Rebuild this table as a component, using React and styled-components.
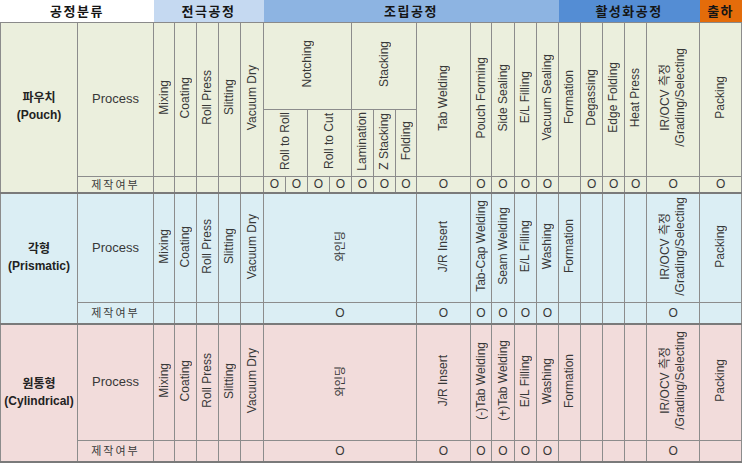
import React from 'react';
import styled, { createGlobalStyle } from 'styled-components';

const GlobalStyle = createGlobalStyle`
  body {
    margin: 0;
    background: #ffffff;
    font-family: "Liberation Sans", Arial, "Noto Sans CJK KR", sans-serif;
  }
`;

const COLORS = {
  pouch: '#ebefdd',
  prismatic: '#dbeef4',
  cylindrical: '#f2dcdb',
};

const WIDTHS = [77, 76, 21, 22, 22, 22, 23, 22, 22, 22, 22, 22, 22, 21, 54, 21, 23, 22, 22, 22, 22, 22, 22, 53, 42];

const Table = styled.table`
  border-collapse: collapse;
  table-layout: fixed;
  width: 742px;
  color: #383838;
`;

const Row = styled.tr`
  height: ${(p) => p.$h}px;
`;

const HeadCell = styled.th`
  background: ${(p) => p.$bg};
  padding: 0;
  border-bottom: 1px solid #8a8a8a;
  font-family: "Liberation Sans", "Noto Sans CJK KR", sans-serif;
  font-size: 13px;
  font-weight: bold;
  letter-spacing: 1.5px;
  color: #151515;
  text-align: center;
  vertical-align: middle;
`;

const Cell = styled.td`
  background: ${(p) => p.$bg};
  border: 1px solid #8c8c8c;
  ${(p) => p.$thickBottom && 'border-bottom: 2px solid #7a7a7a;'}
  padding: 0;
  font-size: 12px;
  line-height: 14px;
  text-align: center;
  vertical-align: middle;
  overflow: hidden;
`;

const TypeName = styled.div`
  font-family: "Liberation Sans", "Noto Sans CJK KR", sans-serif;
  font-weight: bold;
  font-size: 12px;
  line-height: 17px;
  color: #222;
`;

const ProcessLabel = styled.span`
  font-size: 13px;
`;

const MadeLabel = styled.span`
  font-family: "Noto Sans CJK KR", sans-serif;
  font-size: 11px;
  letter-spacing: 2px;
  color: #3a3a3a;
`;

const VText = styled.span`
  display: inline-block;
  writing-mode: vertical-rl;
  text-orientation: sideways;
  transform: rotate(180deg);
  white-space: nowrap;
  font-size: ${(p) => p.$size || 12}px;
  line-height: 15px;
`;

const Mark = styled.span`
  font-size: 12px;
`;

const V = ({ children, size }) => <VText $size={size}>{children}</VText>;

const madeCells = (values, bg) =>
  values.map((v, i) => (
    <Cell key={i} $bg={bg} colSpan={v.span || 1} $thickBottom>
      {v.o ? <Mark>O</Mark> : null}
    </Cell>
  ));

const ELECTRODE = ['Mixing', 'Coating', 'Roll Press', 'Slitting', 'Vacuum Dry'];

const OtherType = ({ name, sub, bg, items, h }) => (
  <>
    <Row $h={h}>
      <Cell $bg={bg} rowSpan={2} $thickBottom>
        <TypeName>
          {name}
          <br />
          {sub}
        </TypeName>
      </Cell>
      <Cell $bg={bg}>
        <ProcessLabel>Process</ProcessLabel>
      </Cell>
      {ELECTRODE.map((t) => (
        <Cell key={t} $bg={bg}>
          <V>{t}</V>
        </Cell>
      ))}
      <Cell $bg={bg} colSpan={7}>
        <V size={11}>와인딩</V>
      </Cell>
      <Cell $bg={bg}>
        <V>J/R Insert</V>
      </Cell>
      {[...items, 'Formation'].map((t) => (
        <Cell key={t} $bg={bg}>
          <V>{t}</V>
        </Cell>
      ))}
      <Cell $bg={bg} />
      <Cell $bg={bg} />
      <Cell $bg={bg} />
      <Cell $bg={bg}>
        <V>
          IR/OCV 측정
          <br />
          /Grading/Selecting
        </V>
      </Cell>
      <Cell $bg={bg}>
        <V>Packing</V>
      </Cell>
    </Row>
    <Row $h={21}>
      <Cell $bg={bg} $thickBottom>
        <MadeLabel>제작여부</MadeLabel>
      </Cell>
      {madeCells(
        [
          {}, {}, {}, {}, {},
          { o: true, span: 7 },
          { o: true },
          { o: true }, { o: true }, { o: true }, { o: true },
          {}, {}, {}, {},
          { o: true },
          {},
        ],
        bg
      )}
    </Row>
  </>
);

export default function App() {
  const pb = COLORS.pouch;
  return (
    <>
      <GlobalStyle />
      <Table>
        <colgroup>
          {WIDTHS.map((w, i) => (
            <col key={i} style={{ width: w }} />
          ))}
        </colgroup>
        <tbody>
          <Row $h={22}>
            <HeadCell colSpan={2} $bg="#ffffff">공정분류</HeadCell>
            <HeadCell colSpan={5} $bg="#c5d9f1">전극공정</HeadCell>
            <HeadCell colSpan={12} $bg="#8db4e2">조립공정</HeadCell>
            <HeadCell colSpan={5} $bg="#548dd4">활성화공정</HeadCell>
            <HeadCell $bg="#e46c0a">출하</HeadCell>
          </Row>

          <Row $h={87}>
            <Cell $bg={pb} rowSpan={3} $thickBottom>
              <TypeName>
                파우치
                <br />
                (Pouch)
              </TypeName>
            </Cell>
            <Cell $bg={pb} rowSpan={2}>
              <ProcessLabel>Process</ProcessLabel>
            </Cell>
            {ELECTRODE.map((t) => (
              <Cell key={t} $bg={pb} rowSpan={2}>
                <V>{t}</V>
              </Cell>
            ))}
            <Cell $bg={pb} colSpan={4}>
              <V>Notching</V>
            </Cell>
            <Cell $bg={pb} colSpan={3}>
              <V>Stacking</V>
            </Cell>
            <Cell $bg={pb} rowSpan={2}>
              <V>Tab Welding</V>
            </Cell>
            {[
              'Pouch Forming',
              'Side Sealing',
              'E/L Filling',
              'Vacuum Sealing',
              'Formation',
              'Degassing',
              'Edge Folding',
              'Heat Press',
            ].map((t) => (
              <Cell key={t} $bg={pb} rowSpan={2}>
                <V>{t}</V>
              </Cell>
            ))}
            <Cell $bg={pb} rowSpan={2}>
              <V>
                IR/OCV 측정
                <br />
                /Grading/Selecting
              </V>
            </Cell>
            <Cell $bg={pb} rowSpan={2}>
              <V>Packing</V>
            </Cell>
          </Row>
          <Row $h={67}>
            <Cell $bg={pb} colSpan={2}>
              <V>Roll to Roll</V>
            </Cell>
            <Cell $bg={pb} colSpan={2}>
              <V>Roll to Cut</V>
            </Cell>
            <Cell $bg={pb}>
              <V>Lamination</V>
            </Cell>
            <Cell $bg={pb}>
              <V>Z Stacking</V>
            </Cell>
            <Cell $bg={pb}>
              <V>Folding</V>
            </Cell>
          </Row>
          <Row $h={16}>
            <Cell $bg={pb} $thickBottom>
              <MadeLabel>제작여부</MadeLabel>
            </Cell>
            {madeCells(
              [
                {}, {}, {}, {}, {},
                { o: true }, { o: true }, { o: true }, { o: true },
                { o: true }, { o: true }, { o: true },
                { o: true },
                { o: true }, { o: true }, { o: true }, { o: true },
                {},
                { o: true }, { o: true }, { o: true },
                { o: true },
                { o: true },
              ],
              pb
            )}
          </Row>

          <OtherType
            name="각형"
            sub="(Prismatic)"
            bg={COLORS.prismatic}
            h={110}
            items={['Tab-Cap Welding', 'Seam Welding', 'E/L Filling', 'Washing']}
          />
          <OtherType
            name="원통형"
            sub="(Cylindrical)"
            bg={COLORS.cylindrical}
            h={117}
            items={['(-)Tab Welding', '(+)Tab Welding', 'E/L Filling', 'Washing']}
          />
        </tbody>
      </Table>
    </>
  );
}
